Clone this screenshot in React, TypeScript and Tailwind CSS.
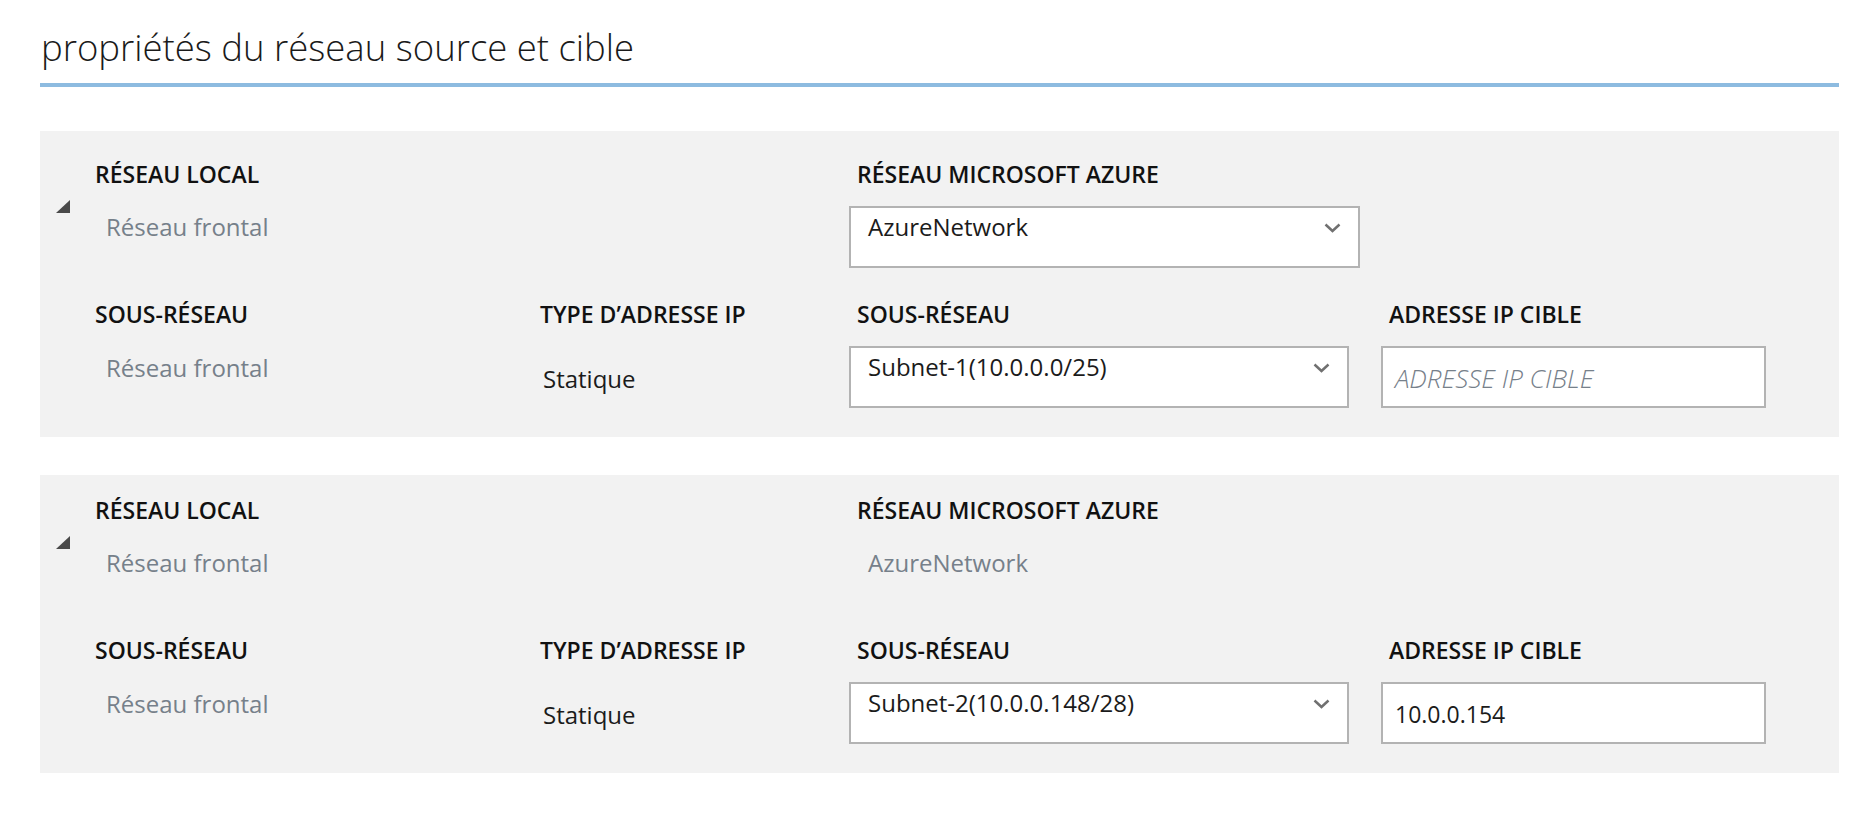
import React from "react";

const font = { fontFamily: '"Open Sans", "Noto Sans", sans-serif' };

function Chevron() {
  return (
    <svg width="17" height="10" viewBox="0 0 17 10" className="shrink-0">
      <polyline points="1.5,1.5 8.5,8 15.5,1.5" fill="none" stroke="#707070" strokeWidth="2.5" />
    </svg>
  );
}

function Triangle() {
  return (
    <svg width="14" height="13" viewBox="0 0 14 13">
      <polygon points="14,0 14,13 0,13" fill="#4a4a4a" />
    </svg>
  );
}

function Label({ children, className = "" }: { children: React.ReactNode; className?: string }) {
  return (
    <div className={"text-[23px] leading-[28px] font-semibold text-[#111] whitespace-nowrap " + className}>
      {children}
    </div>
  );
}

function Select({ value, width }: { value: string; width: string }) {
  return (
    <div className={"h-[62px] border-2 border-[#b3b3b3] bg-white flex items-start justify-between pl-[17px] pr-[17px] pt-[5px] " + width}>
      <span className="text-[24px] leading-[28px] text-[#1b1b1b] whitespace-nowrap">{value}</span>
      <div className="pt-[10px]">
        <Chevron />
      </div>
    </div>
  );
}

function Panel({
  top,
  azure,
  subnet,
  ip,
}: {
  top: string;
  azure: React.ReactNode;
  subnet: string;
  ip: React.ReactNode;
}) {
  return (
    <div className={"bg-[#f2f2f2] flex pb-[29px] " + top}>
      <div className="w-[55px] pl-[16px] pt-[40px] shrink-0">
        <Triangle />
      </div>
      <div className="grid grid-cols-[445px_309px_532px_385px]">
        <div>
          <Label>RÉSEAU LOCAL</Label>
          <div className="h-[62px] mt-[18px] pl-[11px] pt-[7px] text-[24px] leading-[28px] text-[#76808a] whitespace-nowrap">
            Réseau frontal
          </div>
        </div>
        <div />
        <div>
          <Label className="pl-[8px]">RÉSEAU MICROSOFT AZURE</Label>
          <div className="mt-[18px]">{azure}</div>
        </div>
        <div />
        <div className="mt-[32px]">
          <Label>SOUS-RÉSEAU</Label>
          <div className="h-[62px] mt-[18px] pl-[11px] pt-[8px] text-[24px] leading-[28px] text-[#76808a] whitespace-nowrap">
            Réseau frontal
          </div>
        </div>
        <div className="mt-[32px]">
          <Label>TYPE D’ADRESSE IP</Label>
          <div className="h-[62px] mt-[18px] pl-[3px] pt-[3px] flex items-center text-[24px] leading-[28px] text-[#1b1b1b] whitespace-nowrap">
            Statique
          </div>
        </div>
        <div className="mt-[32px]">
          <Label className="pl-[8px]">SOUS-RÉSEAU</Label>
          <div className="mt-[18px]">
            <Select value={subnet} width="w-[500px]" />
          </div>
        </div>
        <div className="mt-[32px]">
          <Label className="pl-[8px]">ADRESSE IP CIBLE</Label>
          <div className="mt-[18px] h-[62px] w-[385px] border-2 border-[#b3b3b3] bg-white flex items-center pl-[12px] pt-[2px]">
            {ip}
          </div>
        </div>
      </div>
    </div>
  );
}

export default function App() {
  return (
    <div className="w-[1870px] h-[816px] bg-white pl-[40px] pr-[31px] overflow-hidden" style={font}>
      <div className="pt-[25px] pl-[1px] text-[36.5px] leading-[44px] font-light text-[#1a1a1a] whitespace-nowrap">
        propriétés du réseau source et cible
      </div>
      <div className="mt-[14px] h-[4px] bg-[#8dbbe0]" />
      <div className="mt-[44px]">
        <Panel
          top="pt-[29px]"
          azure={<Select value="AzureNetwork" width="w-[511px]" />}
          subnet="Subnet-1(10.0.0.0/25)"
          ip={<span className="text-[26px] leading-[30px] italic font-light text-[#76808a] whitespace-nowrap">ADRESSE IP CIBLE</span>}
        />
      </div>
      <div className="mt-[38px]">
        <Panel
          top="pt-[21px]"
          azure={
            <div className="h-[62px] pl-[19px] pt-[7px] text-[24px] leading-[28px] text-[#76808a] whitespace-nowrap">
              AzureNetwork
            </div>
          }
          subnet="Subnet-2(10.0.0.148/28)"
          ip={<span className="text-[23px] leading-[28px] text-[#1b1b1b] whitespace-nowrap">10.0.0.154</span>}
        />
      </div>
    </div>
  );
}
